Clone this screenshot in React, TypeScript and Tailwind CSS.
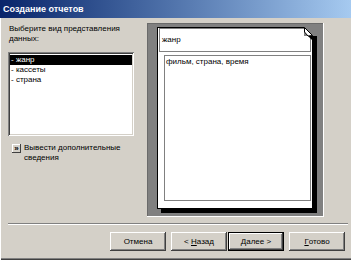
const raised =
  'shadow-[inset_-1px_-1px_0_#404040,inset_1px_1px_0_#ffffff,inset_-2px_-2px_0_#808080,inset_2px_2px_0_#d4d0c8]'

function WizButton({ children, isDefault }: { children: React.ReactNode; isDefault?: boolean }) {
  return (
    <div
      className={
        'h-[19px] w-[56px] flex items-center justify-center bg-[#d4d0c8] text-black ' +
        (isDefault ? 'border border-black ' : '') +
        raised
      }
    >
      {children}
    </div>
  )
}

const items = ['- жанр', '- кассеты', '- страна']

export default function App() {
  return (
    <div
      className="w-[351px] h-[260px] bg-[#d4d0c8] flex flex-col overflow-hidden shadow-[inset_1px_0_0_#ffffff,inset_0_-1px_0_#404040,inset_0_-2px_0_#808080] text-[8px] leading-[10px] text-black"
      style={{ fontFamily: '"Liberation Sans", Arial, sans-serif' }}
    >
      {/* title bar */}
      <div className="h-[18px] shrink-0 flex items-center pl-[3px] bg-gradient-to-r from-[#0a246a] to-[#a6caf0] text-white font-bold text-[9px]">
        Создание отчетов
      </div>

      <div className="flex pl-[8px] pt-[5px]">
        {/* left column */}
        <div className="w-[126px] flex flex-col">
          <div className="pl-[1px] pt-[1px] leading-[10px]">
            Выберите вид представления
            <br />
            данных:
          </div>
          <div className="mt-[8px] h-[84px] bg-white p-[2px] shadow-[inset_1px_1px_0_#808080,inset_-1px_-1px_0_#ffffff,inset_2px_2px_0_#404040,inset_-2px_-2px_0_#d4d0c8]">
            <div className="pt-[1px]">
              {items.map((it, i) => (
                <div
                  key={it}
                  className={
                    'h-[10px] leading-[10px] pl-[1px] ' + (i === 0 ? 'bg-black text-white' : 'text-black')
                  }
                >
                  {it}
                </div>
              ))}
            </div>
          </div>
          <div className="mt-[8px] flex items-start pl-[4px]">
            <div
              className={
                'w-[9px] h-[9px] shrink-0 flex items-center justify-center text-[8px] leading-[8px] font-bold bg-[#d4d0c8] ' +
                'shadow-[inset_-1px_-1px_0_#404040,inset_1px_1px_0_#ffffff]'
              }
            >
              »
            </div>
            <div className="ml-[3px] mt-[-1px] leading-[10px]">
              Вывести дополнительные
              <br />
              сведения
            </div>
          </div>
        </div>

        {/* preview panel */}
        <div className="ml-[13px] w-[177px] h-[194px] bg-[#808080] shadow-[inset_-1px_-1px_0_#ffffff,inset_1px_1px_0_#6a6a6a] pt-[4px] pl-[10px]">
          <div className="relative w-[156px] h-[182px] bg-white border border-black shadow-[4px_4px_0_#000000]">
            <div className="mx-[1px] h-[24px] border border-[#808080] flex items-center pl-[2px]">жанр</div>
            <div className="ml-[6px] mt-[3px] w-[147px] h-[146px] border border-[#808080] pl-[1px] pt-[1px]">
              фильм, страна, время
            </div>
            <svg
              className="absolute top-[-1px] right-[-5px]"
              width="13"
              height="13"
              viewBox="0 0 13 13"
            >
              <polygon points="0,0 13,0 13,13" fill="#808080" />
              <polygon points="4,9 13,9 13,13 8,13" fill="#000000" />
              <polygon points="0,0 9,9 0,9" fill="#808080" />
              <polygon points="0.5,0.5 0.5,5 4,9 8.5,8.5" fill="#ffffff" stroke="#000000" strokeWidth="1" />
            </svg>
          </div>
        </div>
      </div>

      {/* separator */}
      <div className="mt-[6px] ml-[8px] mr-[3px] h-[2px] border-t border-[#808080] border-b border-b-white" />

      {/* buttons */}
      <div className="mt-[7px] flex pl-[110px]">
        <WizButton>Отмена</WizButton>
        <div className="ml-[5px]">
          <WizButton>
            &lt;&nbsp;<span className="underline">Н</span>азад
          </WizButton>
        </div>
        <div className="ml-[1px]">
          <WizButton isDefault>
            <span className="underline">Д</span>алее&nbsp;&gt;
          </WizButton>
        </div>
        <div className="ml-[5px]">
          <WizButton>
            <span className="underline">Г</span>отово
          </WizButton>
        </div>
      </div>
    </div>
  )
}
